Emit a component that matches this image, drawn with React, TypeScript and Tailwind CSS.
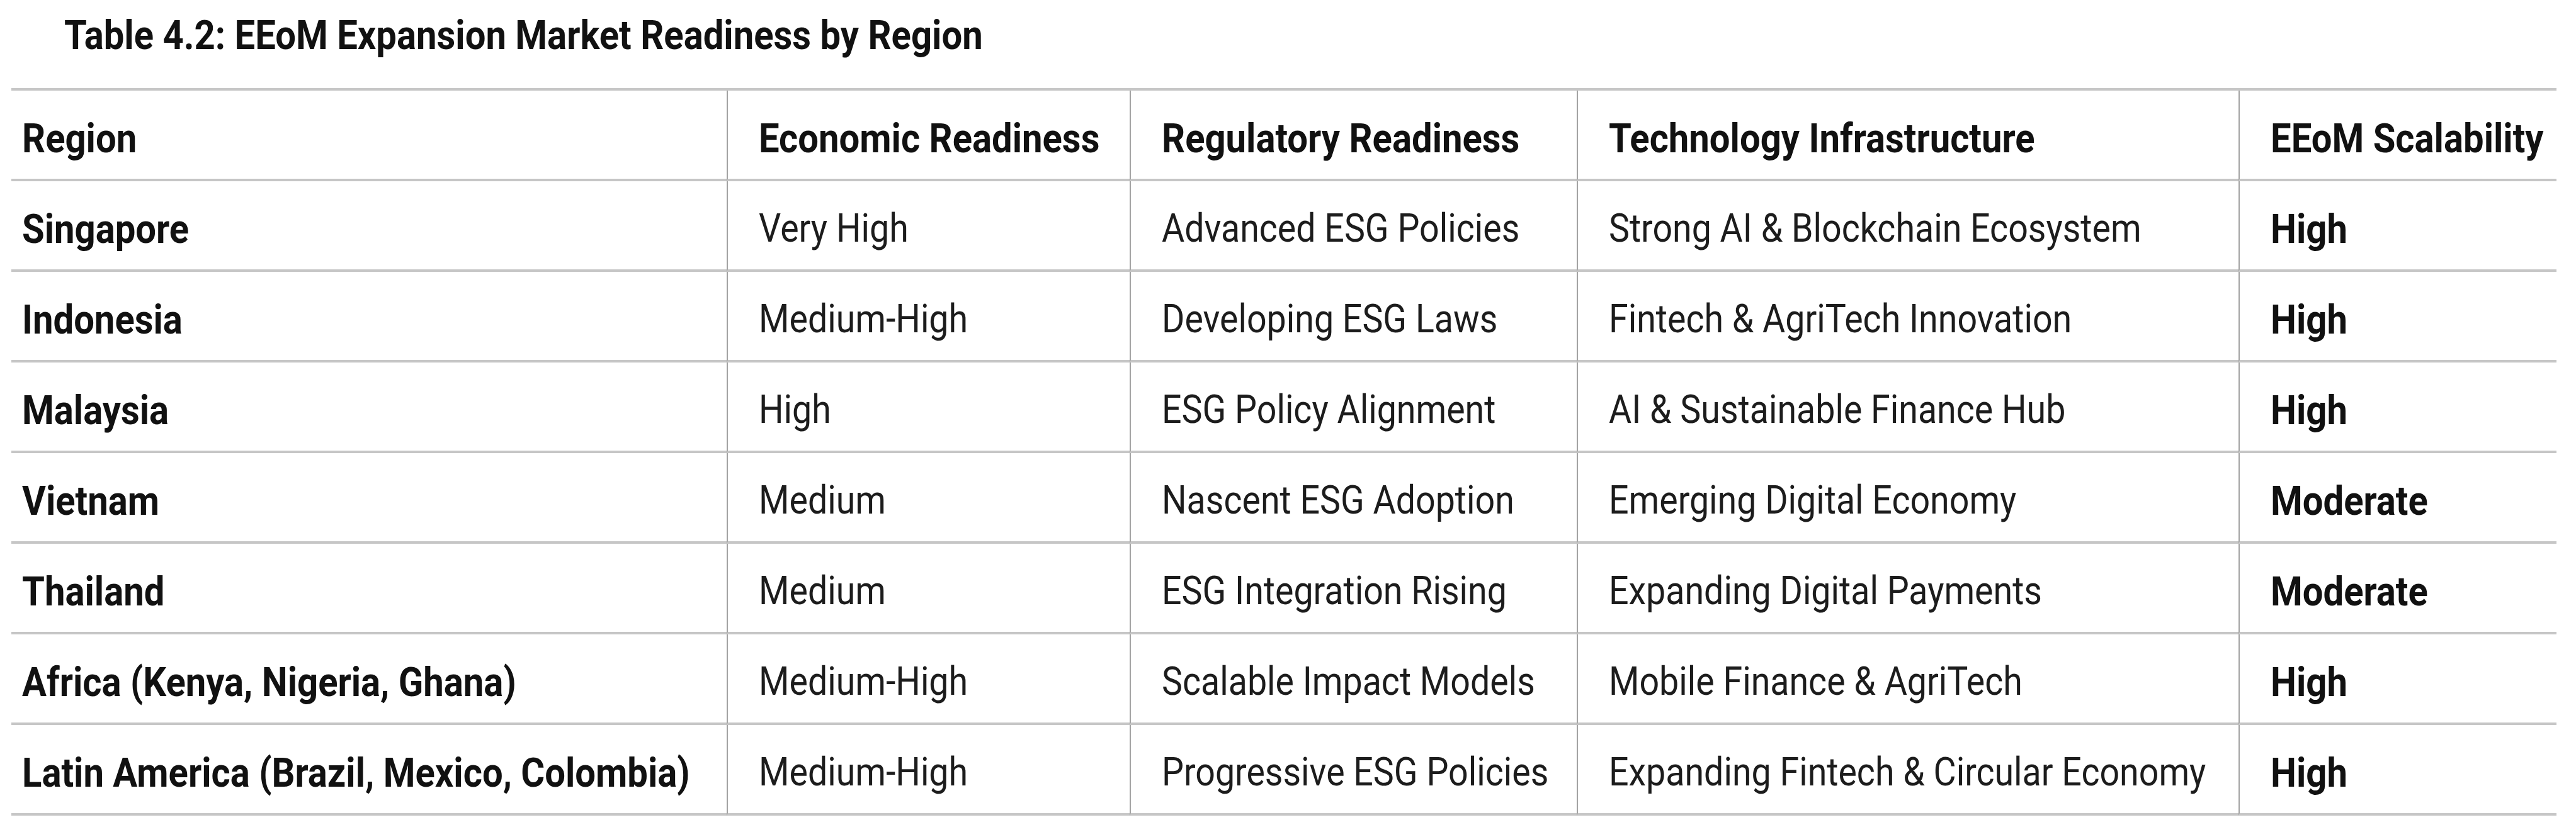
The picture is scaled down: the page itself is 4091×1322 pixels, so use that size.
const HEADERS = [
  "Region",
  "Economic Readiness",
  "Regulatory Readiness",
  "Technology Infrastructure",
  "EEoM Scalability",
];

const ROWS: string[][] = [
  ["Singapore", "Very High", "Advanced ESG Policies", "Strong AI & Blockchain Ecosystem", "High"],
  ["Indonesia", "Medium-High", "Developing ESG Laws", "Fintech & AgriTech Innovation", "High"],
  ["Malaysia", "High", "ESG Policy Alignment", "AI & Sustainable Finance Hub", "High"],
  ["Vietnam", "Medium", "Nascent ESG Adoption", "Emerging Digital Economy", "Moderate"],
  ["Thailand", "Medium", "ESG Integration Rising", "Expanding Digital Payments", "Moderate"],
  ["Africa (Kenya, Nigeria, Ghana)", "Medium-High", "Scalable Impact Models", "Mobile Finance & AgriTech", "High"],
  [
    "Latin America (Brazil, Mexico, Colombia)",
    "Medium-High",
    "Progressive ESG Policies",
    "Expanding Fintech & Circular Economy",
    "High",
  ],
];

// first and last columns are bold, middle three are regular
const boldCol = (i: number) => i === 0 || i === 4;

function Cell({ text, col, head }: { text: string; col: number; head?: boolean }) {
  const bold = head || boldCol(col);
  return (
    <div
      className={
        "flex h-[144px] items-center border-b-4 border-[#c6c6c6] pt-[12px] whitespace-nowrap " +
        (col === 0 ? "pl-[17px]" : "border-l-2 border-l-[#a3a3a3] pl-[49px]")
      }
    >
      <span
        className={
          "inline-block scale-y-[1.12] leading-none " +
          (bold ? "text-[58px] font-bold text-[#111111]" : "text-[55.5px] font-normal text-[#1c1c1c]")
        }
      >
        {text}
      </span>
    </div>
  );
}

export default function App() {
  return (
    <div className="min-h-screen w-full bg-white font-['Roboto',_'Liberation_Sans',_sans-serif]">
      <div className="h-[140px] pl-[102px] pt-[27px]">
        <h1 className="inline-block scale-y-[1.12] text-[58px] font-bold leading-none text-[#111111]">
          Table 4.2: EEoM Expansion Market Readiness by Region
        </h1>
      </div>
      <div className="ml-[18px] w-[4042px] border-t-4 border-[#c6c6c6]">
        <div className="grid grid-cols-[1136px_640px_710px_1051px_505px]">
          {HEADERS.map((h, i) => (
            <Cell key={h} text={h} col={i} head />
          ))}
          {ROWS.map((row) =>
            row.map((c, i) => <Cell key={row[0] + i} text={c} col={i} />)
          )}
        </div>
      </div>
    </div>
  );
}
